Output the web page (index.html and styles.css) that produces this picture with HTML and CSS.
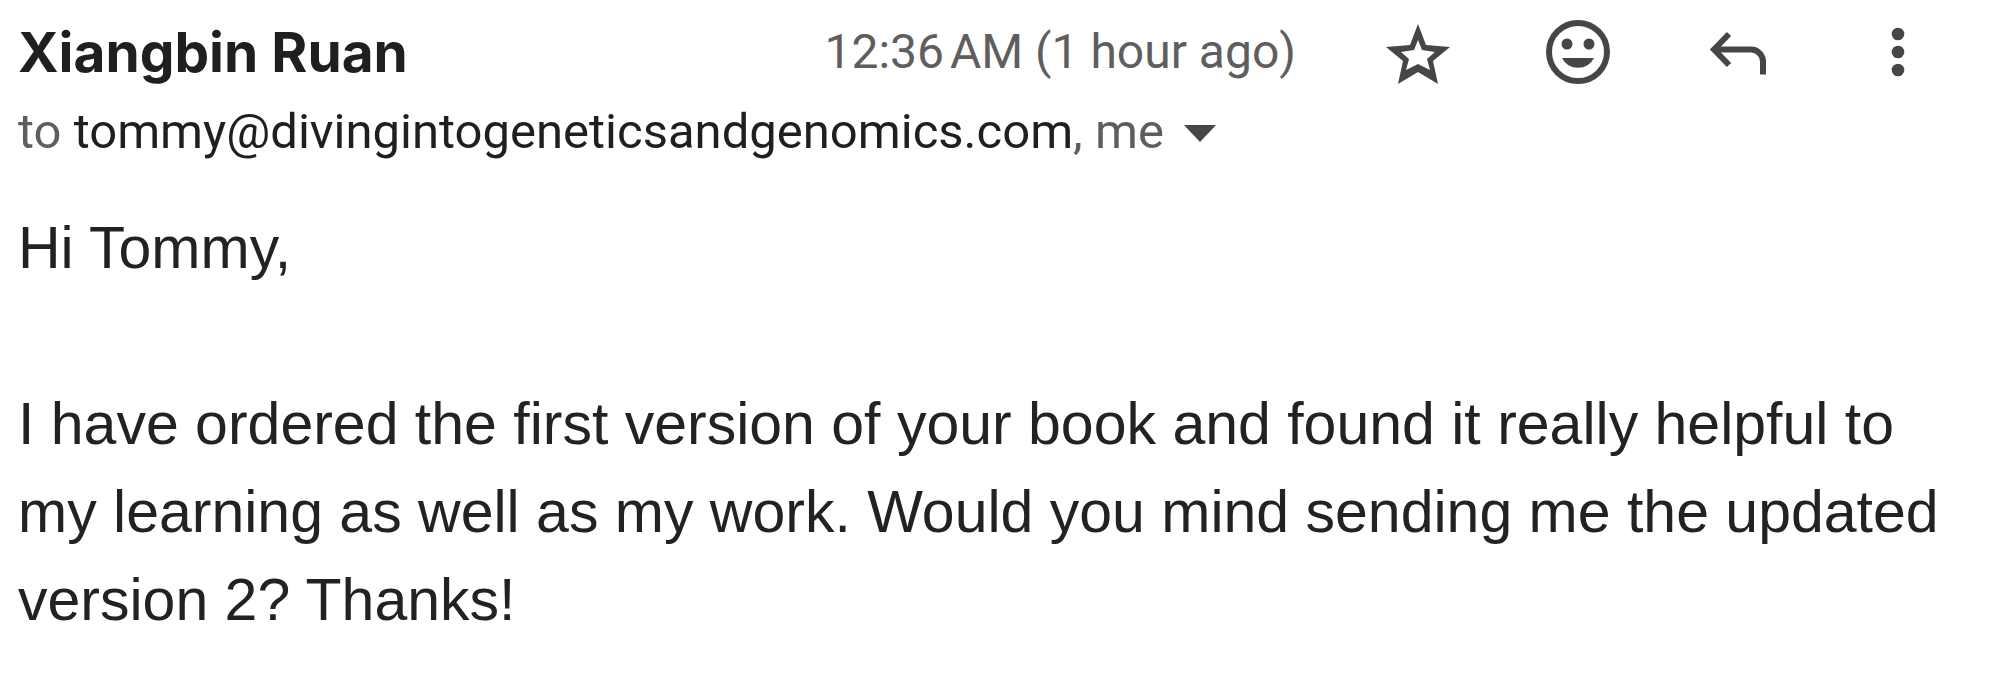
FILE: index.html
```
<!DOCTYPE html>
<html lang="en">
<head>
    <meta charset="UTF-8">
    <meta name="viewport" content="width=device-width, initial-scale=1.0">
    <title>Message</title>
    <link rel="stylesheet" href="styles.css">
</head>
<body>
    <article class="message">
        <header class="message-header">
            <div class="top-row">
                <h1 class="sender">Xiangbin Ruan</h1>
                <time class="date">12:36&#8239;AM (1 hour ago)</time>
                <div class="actions">
                    <button type="button" class="icon-btn" aria-label="Star">
                        <svg viewBox="0 0 80 80">
                            <path class="fill" fill-rule="evenodd" d="M40 12 L48 33 L72 35 L55 49 L60 72 L40 60 L20 72 L25 49 L8 35 L32 33 Z M40 28 L36 38 L23 40 L31 47 L28 58 L40 52 L52 58 L49 47 L57 40 L44 38 Z"/>
                        </svg>
                    </button>
                    <button type="button" class="icon-btn" aria-label="Add reaction">
                        <svg viewBox="0 0 80 80">
                            <circle cx="40" cy="40" r="29"/>
                            <circle class="fill" cx="29" cy="32" r="5.5"/>
                            <circle class="fill" cx="51" cy="32" r="5.5"/>
                            <path class="fill" d="M24 46 H56 A18 18 0 0 1 24 46 Z"/>
                        </svg>
                    </button>
                    <button type="button" class="icon-btn" aria-label="Reply">
                        <svg viewBox="0 0 80 80">
                            <path d="M31 22 L16 37.5 L31 53"/>
                            <path d="M16 37.5 H53 A12 12 0 0 1 65 49.5 V62.5"/>
                        </svg>
                    </button>
                    <button type="button" class="icon-btn" aria-label="More">
                        <svg viewBox="0 0 80 80">
                            <circle class="fill" cx="40" cy="22" r="6.3"/>
                            <circle class="fill" cx="40" cy="40" r="6.3"/>
                            <circle class="fill" cx="40" cy="58" r="6.3"/>
                        </svg>
                    </button>
                </div>
            </div>
            <div class="recipients">
                <span>to <span class="address">tommy@divingintogeneticsandgenomics.com</span>, me</span>
                <button type="button" class="details-btn" aria-label="Show details">
                    <svg viewBox="0 0 32 18"><path d="M0 0 H32 L16 17 Z"/></svg>
                </button>
            </div>
        </header>
        <div class="message-body">
            <p>Hi Tommy,</p>
            <p>I have ordered the first version of your book and found it really helpful to my learning as well as my work. Would you mind sending me the updated version 2? Thanks!</p>
        </div>
    </article>
</body>
</html>
```
FILE: styles.css
```
body {
    margin: 0;
    background: #fff;
    color: #222;
    font-family: Roboto, Arial, sans-serif;
}
.message {
    padding: 12px 40px 28px 18px;
}
.top-row {
    display: flex;
    align-items: center;
    height: 80px;
    padding-right: 18px;
}
.sender {
    flex: 1;
    margin: 0;
    font-family: Inter, Roboto, sans-serif;
    font-size: 55px;
    font-weight: 700;
    line-height: 80px;
    color: #1f1f1f;
}
.date {
    margin-right: 82px;
    font-size: 48px;
    line-height: 80px;
    color: #5e5e5e;
    white-space: nowrap;
}
.actions {
    display: flex;
    gap: 80px;
}
button {
    padding: 0;
    border: none;
    background: none;
    cursor: pointer;
}
.icon-btn {
    width: 80px;
    height: 80px;
}
.icon-btn svg {
    display: block;
    fill: none;
    stroke: #444746;
    stroke-width: 6;
}
.icon-btn .fill {
    fill: #444746;
    stroke: none;
}
.recipients {
    display: flex;
    align-items: center;
    gap: 20px;
    font-size: 49px;
    line-height: 80px;
    color: #5e5e5e;
}
.address {
    color: #1f1f1f;
}
.details-btn {
    padding-top: 4px;
}
.details-btn svg {
    display: block;
    width: 32px;
    height: 18px;
    fill: #444746;
}
.message-body {
    margin-top: 32px;
    font-family: "Liberation Sans", Arial, sans-serif;
    font-size: 59px;
    line-height: 88px;
    color: #222;
}
.message-body p {
    margin: 0 0 88px;
}
.message-body p:last-child {
    margin-bottom: 0;
}
```
